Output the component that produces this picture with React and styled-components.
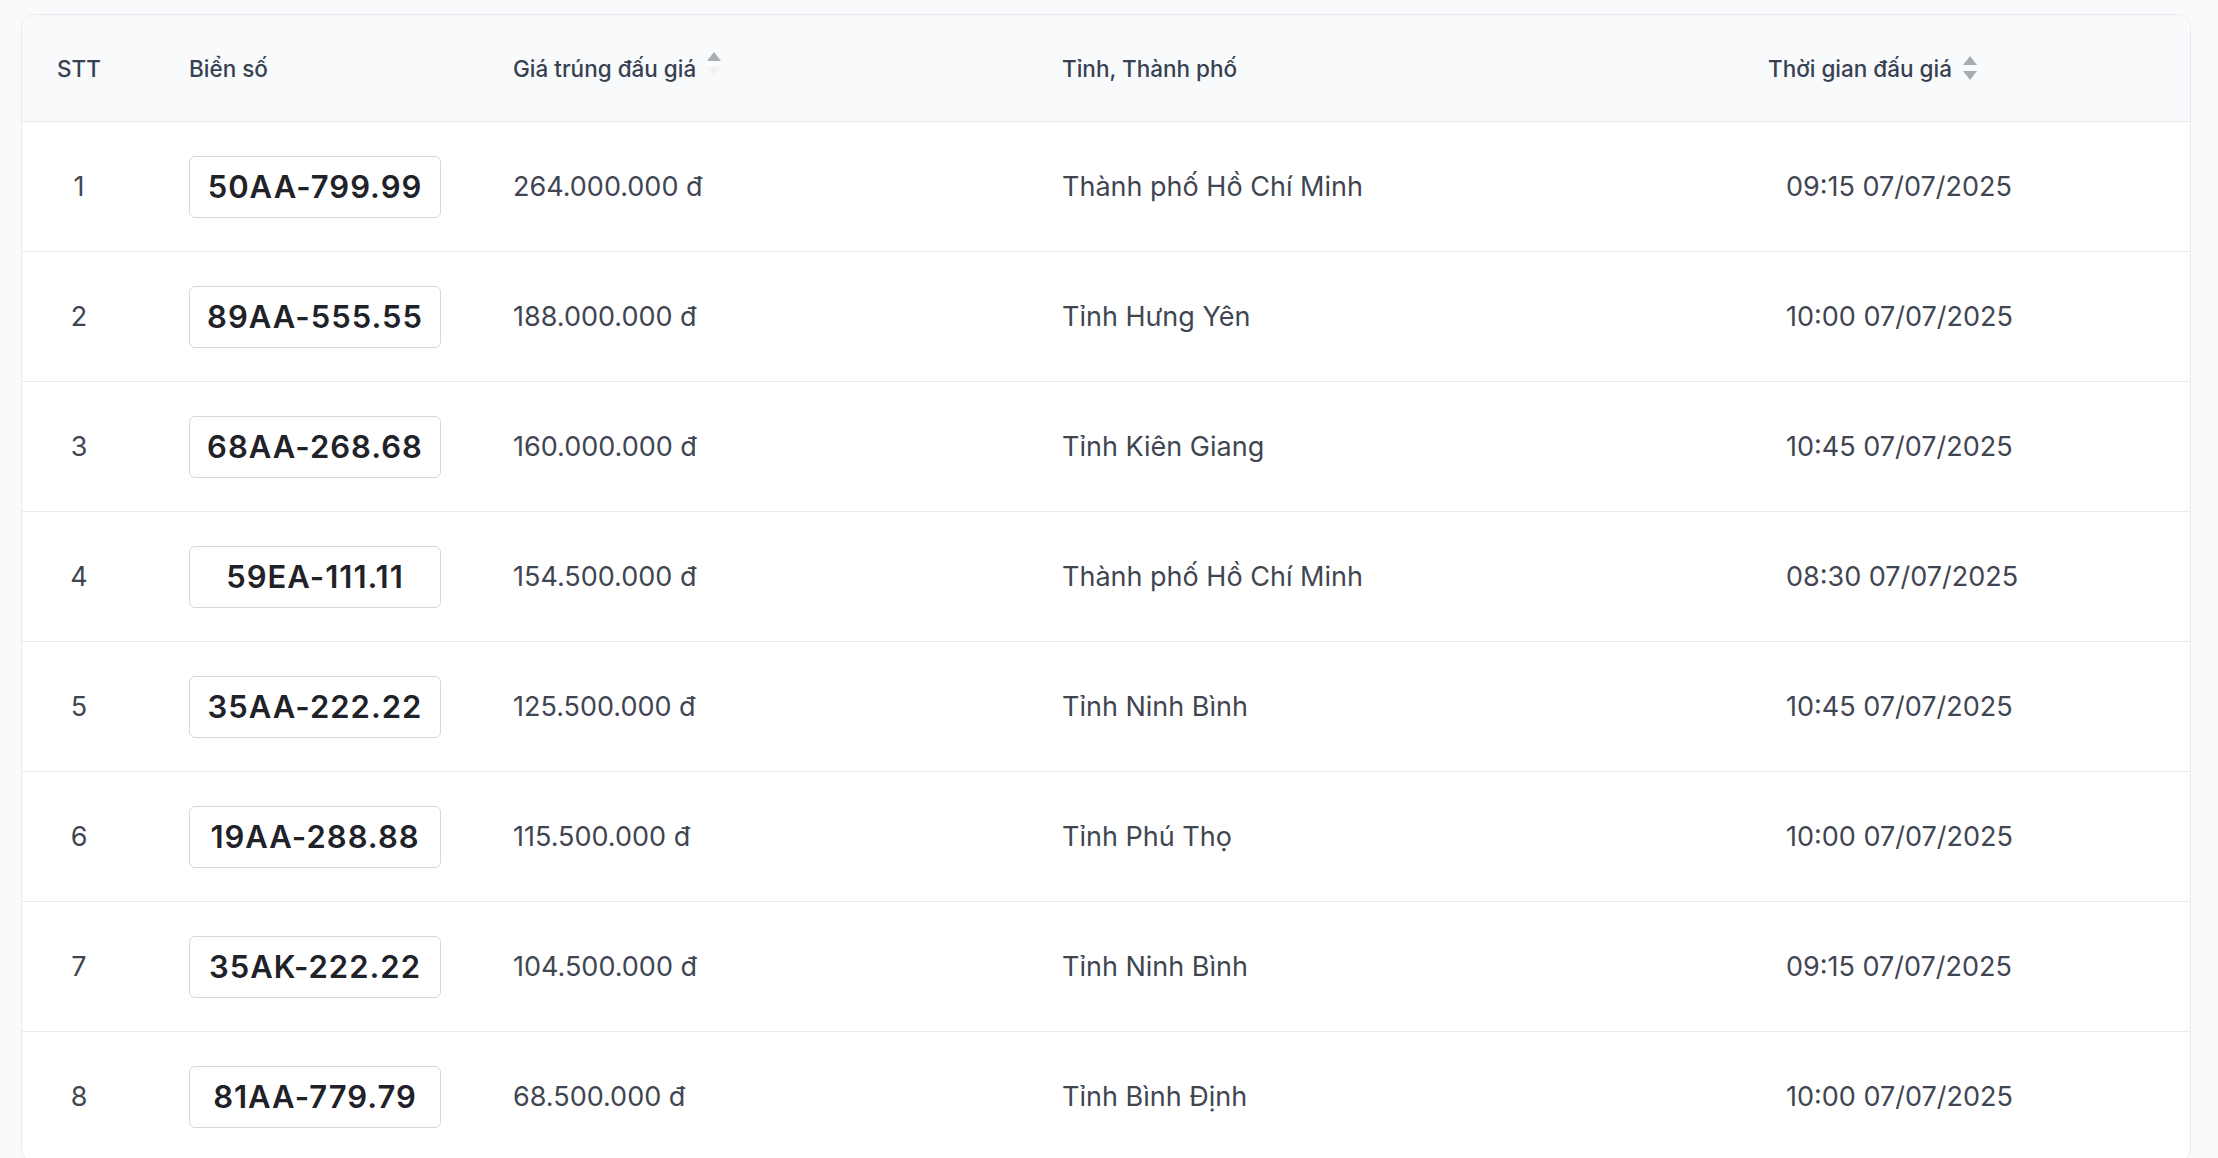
import React from "react";
import styled, { createGlobalStyle } from "styled-components";

const Global = createGlobalStyle`
  html, body { margin: 0; padding: 0; background: #f9fafb; overflow: hidden; }
  body { font-family: Inter, "Noto Sans", sans-serif; }
`;

const Page = styled.div`
  padding: 14px 27px 0 21px;
`;

const Card = styled.div`
  background: #fff;
  border: 1.5px solid #e8eaee;
  border-radius: 14px;
  overflow: hidden;
`;

const cols = "167px 324px 549px 706px 1fr";

const HeadRow = styled.div`
  display: grid;
  grid-template-columns: ${cols};
  height: 106px;
  align-items: center;
  background: #f9fafb;
  border-bottom: 1.5px solid #e8eaee;
`;

const Row = styled.div`
  display: grid;
  grid-template-columns: ${cols};
  height: 129px;
  align-items: center;
  border-bottom: 1.5px solid #e8eaee;
`;

const HeadCell = styled.div`
  font-size: 22.5px;
  font-weight: 500;
  color: #374151;
  display: flex;
  align-items: center;
  gap: 10px;
  ${(p) => (p.center ? "justify-content:center; width:114px;" : "")}
`;

const Cell = styled.div`
  font-size: 27px;
  color: #3f4652;
  ${(p) => (p.center ? "text-align:center; width:114px;" : "")}
  ${(p) => (p.pad ? `padding-left:${p.pad}px;` : "")}
`;

const Plate = styled.div`
  display: inline-flex;
  align-items: center;
  justify-content: center;
  width: 252px;
  height: 62px;
  box-sizing: border-box;
  border: 1.5px solid #d5d8de;
  border-radius: 6px;
  font-size: 31px;
  font-weight: 600;
  letter-spacing: 1px;
  color: #1f2228;
`;

const Sort = ({ up = "#a8acb3", down = "#a8acb3", top }) => (
  <svg width="16" height="30" viewBox="0 0 16 30" style={{ marginTop: top }}>
    <path d="M8 3 L15 12 H1 Z" fill={up} />
    <path d="M8 27 L15 18 H1 Z" fill={down} />
  </svg>
);

const data = [
  ["50AA-799.99", "264.000.000 đ", "Thành phố Hồ Chí Minh", "09:15 07/07/2025"],
  ["89AA-555.55", "188.000.000 đ", "Tỉnh Hưng Yên", "10:00 07/07/2025"],
  ["68AA-268.68", "160.000.000 đ", "Tỉnh Kiên Giang", "10:45 07/07/2025"],
  ["59EA-111.11", "154.500.000 đ", "Thành phố Hồ Chí Minh", "08:30 07/07/2025"],
  ["35AA-222.22", "125.500.000 đ", "Tỉnh Ninh Bình", "10:45 07/07/2025"],
  ["19AA-288.88", "115.500.000 đ", "Tỉnh Phú Thọ", "10:00 07/07/2025"],
  ["35AK-222.22", "104.500.000 đ", "Tỉnh Ninh Bình", "09:15 07/07/2025"],
  ["81AA-779.79", "68.500.000 đ", "Tỉnh Bình Định", "10:00 07/07/2025"],
];

export default function App() {
  return (
    <Page>
      <Global />
      <Card>
        <HeadRow>
          <HeadCell center>STT</HeadCell>
          <HeadCell>Biển số</HeadCell>
          <HeadCell>
            Giá trúng đấu giá <Sort down="#f1f2f4" top="-8px" />
          </HeadCell>
          <HeadCell>Tỉnh, Thành phố</HeadCell>
          <HeadCell>
            Thời gian đấu giá <Sort />
          </HeadCell>
        </HeadRow>
        {data.map((d, i) => (
          <Row key={i}>
            <Cell center>{i + 1}</Cell>
            <div>
              <Plate>{d[0]}</Plate>
            </div>
            <Cell>{d[1]}</Cell>
            <Cell>{d[2]}</Cell>
            <Cell pad={18}>{d[3]}</Cell>
          </Row>
        ))}
      </Card>
    </Page>
  );
}
